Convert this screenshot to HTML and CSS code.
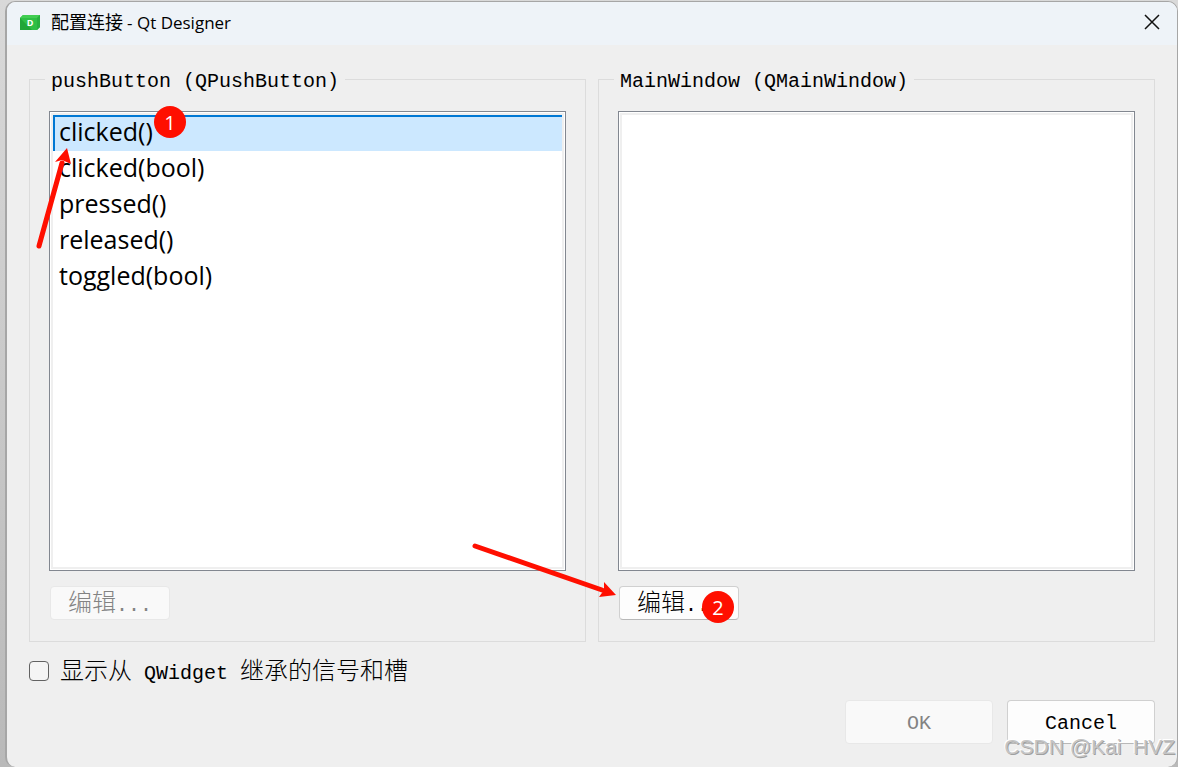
FILE: index.html
```
<!DOCTYPE html>
<html lang="zh-CN">
<head>
<meta charset="UTF-8" />
<meta name="viewport" content="width=device-width, initial-scale=1" />
<title>配置连接 - Qt Designer</title>
<link rel="stylesheet" href="styles.css">
</head>
<body>

<div class="dialog">
  <header class="titlebar">
    <svg class="app-icon" viewBox="0 0 20 15" aria-hidden="true">
      <path d="M3 0H20V12L17 15H0V3Z" fill="#2fbf45" />
      <path d="M3 0H20L17 3H0Z" fill="#41cd52" />
      <path d="M0 3L12 15H0Z" fill="#21a637" />
      <path d="M20 0V12L17 15V3Z" fill="#28b03e" />
      <text x="10" y="11" class="app-letter">D</text>
    </svg>
    <h1 class="title"><span class="title-cjk">配置连接 </span>- Qt Designer</h1>
    <button type="button" class="close" aria-label="Close">
      <svg viewBox="0 0 16 16"><path d="M1 1L15 15M15 1L1 15" /></svg>
    </button>
  </header>

  <form class="content">
    <div class="groups">
      <fieldset class="group">
        <legend>pushButton (QPushButton)</legend>
        <div class="group-body">
          <ul class="list" role="listbox" aria-label="Signals" tabindex="0">
            <li class="item selected" role="option" aria-selected="true">clicked()<span class="badge badge-signal">1</span>
              <svg class="arrow arrow-signal" viewBox="0 0 42 106" aria-hidden="true">
                <path class="shaft" d="M6 101L29 18" />
                <path class="head" d="M34 3L22 17L29 15L38 19Z" />
              </svg>
            </li>
            <li class="item" role="option">clicked(bool)</li>
            <li class="item" role="option">pressed()</li>
            <li class="item" role="option">released()</li>
            <li class="item" role="option">toggled(bool)</li>
          </ul>
          <div class="edit-row">
            <button type="button" class="btn btn-edit" disabled><span class="cjk">编辑</span>...</button>
          </div>
        </div>
      </fieldset>

      <fieldset class="group">
        <legend>MainWindow (QMainWindow)</legend>
        <div class="group-body">
          <ul class="list" role="listbox" aria-label="Slots" tabindex="0"></ul>
          <div class="edit-row">
            <button type="button" class="btn btn-edit"><span class="cjk">编辑</span>...</button>
            <span class="badge badge-slot">2</span>
            <svg class="arrow arrow-slot" viewBox="0 0 150 62" aria-hidden="true">
              <path class="shaft" d="M7 10L134 54" />
              <path class="head" d="M148 59L136 46L136 54L131 61Z" />
            </svg>
          </div>
        </div>
      </fieldset>
    </div>

    <div class="option-row">
      <input type="checkbox" id="showInherited" />
      <label for="showInherited"><span class="cjk">显示从</span> QWidget <span class="cjk">继承的信号和槽</span></label>
    </div>

    <div class="actions">
      <button type="submit" class="btn btn-action" disabled>OK</button>
      <button type="button" class="btn btn-action">Cancel</button>
    </div>
  </form>
  <div class="watermark">CSDN @Kai&nbsp;&nbsp;HVZ</div>
</div>

</body>
</html>
```
FILE: styles.css
```
* {
  box-sizing: border-box;
}
body {
  margin: 0;
  min-height: 100vh;
  display: flex;
  padding: 1px 0 0 5px;
  background: linear-gradient(#d9d9d9, #b9b9b9);
  color: #000;
  font-family: "Liberation Mono", "Noto Sans CJK SC", monospace;
  font-size: 20px;
  line-height: 24px;
}
button {
  font: inherit;
  color: inherit;
}
.dialog {
  position: relative;
  flex: 1;
  display: flex;
  flex-direction: column;
  border: 1px solid #a6a6a6;
  border-left-width: 2px;
  border-bottom: 0;
  border-radius: 10px;
  background: #efefef;
  overflow: hidden;
}

/* title bar */
.titlebar {
  display: flex;
  align-items: center;
  height: 43px;
  padding: 0 17px 3px 13px;
  background: #eef3f8;
}
.app-icon {
  width: 20px;
  height: 15px;
}
.app-letter {
  font: bold 9px "Open Sans", sans-serif;
  fill: #fff;
  text-anchor: middle;
}
.title {
  flex: 1;
  margin: 0 0 0 11px;
  font: 17px/24px "Open Sans", "Noto Sans CJK SC", sans-serif;
}
.title-cjk {
  font-family: "Noto Sans CJK SC", sans-serif;
  font-size: 18px;
}
.close {
  display: flex;
  padding: 0;
  border: 0;
  background: none;
}
.close svg {
  width: 16px;
  height: 16px;
  fill: none;
  stroke: #111;
  stroke-width: 1.5;
}

/* content */
.content {
  flex: 1;
  display: flex;
  flex-direction: column;
  padding: 20px 22px 23px;
}
.groups {
  flex: 1;
  display: grid;
  grid-template-columns: 1fr 1fr;
  gap: 12px;
}
.group {
  display: flex;
  min-width: 0;
  margin: 0;
  padding: 17px 15px 21px;
  border: 1px solid #dcdcdc;
}
.group legend {
  padding: 5px 6px 0;
}
.group-body {
  flex: 1;
  display: flex;
  flex-direction: column;
  gap: 15px;
  padding: 0 4px;
}
.list {
  flex: 1;
  margin: 0;
  padding: 3px;
  border: 1px solid #828790;
  outline: 2px solid #efefef;
  outline-offset: -4px;
  background: #fff;
  list-style: none;
  font: 25px/32px "Open Sans", "Noto Sans", sans-serif;
}
.item {
  position: relative;
  height: 36px;
  padding-left: 6px;
}
.item.selected {
  background: #cce8ff;
  box-shadow: inset 2px 2px #0078d4;
}
.edit-row {
  position: relative;
  display: flex;
  padding: 0 1px;
}

/* buttons */
.btn {
  padding: 0;
  border: 1px solid #d0d0d0;
  border-bottom-color: #b8b8b8;
  border-radius: 4px;
  background: #fdfdfd;
}
.btn:disabled {
  border-color: #e8e8e8;
  background: #f9f9f9;
  color: #838383;
}
.btn-edit {
  width: 120px;
  height: 34px;
}
.btn-action {
  width: 148px;
  height: 44px;
  padding-top: 4px;
}
.cjk {
  font-family: "Noto Sans CJK SC", sans-serif;
  font-size: 24px;
  font-weight: 300;
}
.option-row {
  display: flex;
  align-items: center;
  gap: 11px;
  height: 58px;
}
.option-row input {
  appearance: none;
  width: 20px;
  height: 20px;
  margin: 0;
  border: 1px solid #626262;
  border-radius: 4px;
  background: #f5f5f5;
}
.actions {
  display: flex;
  justify-content: flex-end;
  gap: 14px;
}

/* step markers */
.badge {
  position: absolute;
  z-index: 1;
  width: 32px;
  height: 32px;
  border-radius: 50%;
  background: #ff0f00;
  color: #fff;
  font: 20px/34px "Open Sans", sans-serif;
  text-align: center;
}
.badge-signal {
  top: -9px;
  left: 101px;
}
.badge-slot {
  top: 5px;
  left: 84px;
}
.arrow {
  position: absolute;
  z-index: 1;
  pointer-events: none;
}
.arrow-signal {
  top: 30px;
  left: -20px;
  width: 42px;
  height: 106px;
}
.arrow-slot {
  top: -50px;
  left: -150px;
  width: 150px;
  height: 62px;
}
.shaft {
  fill: none;
  stroke: #ff0f00;
  stroke-width: 5;
  stroke-linecap: round;
}
.head {
  fill: #ff0f00;
}
.watermark {
  position: absolute;
  right: 2px;
  bottom: 8px;
  color: #c4c4c4;
  font: 21px/24px "Liberation Sans", Arial, sans-serif;
  text-shadow: 1px 1px #a0a0a0, -1px -1px #fff;
}
```
